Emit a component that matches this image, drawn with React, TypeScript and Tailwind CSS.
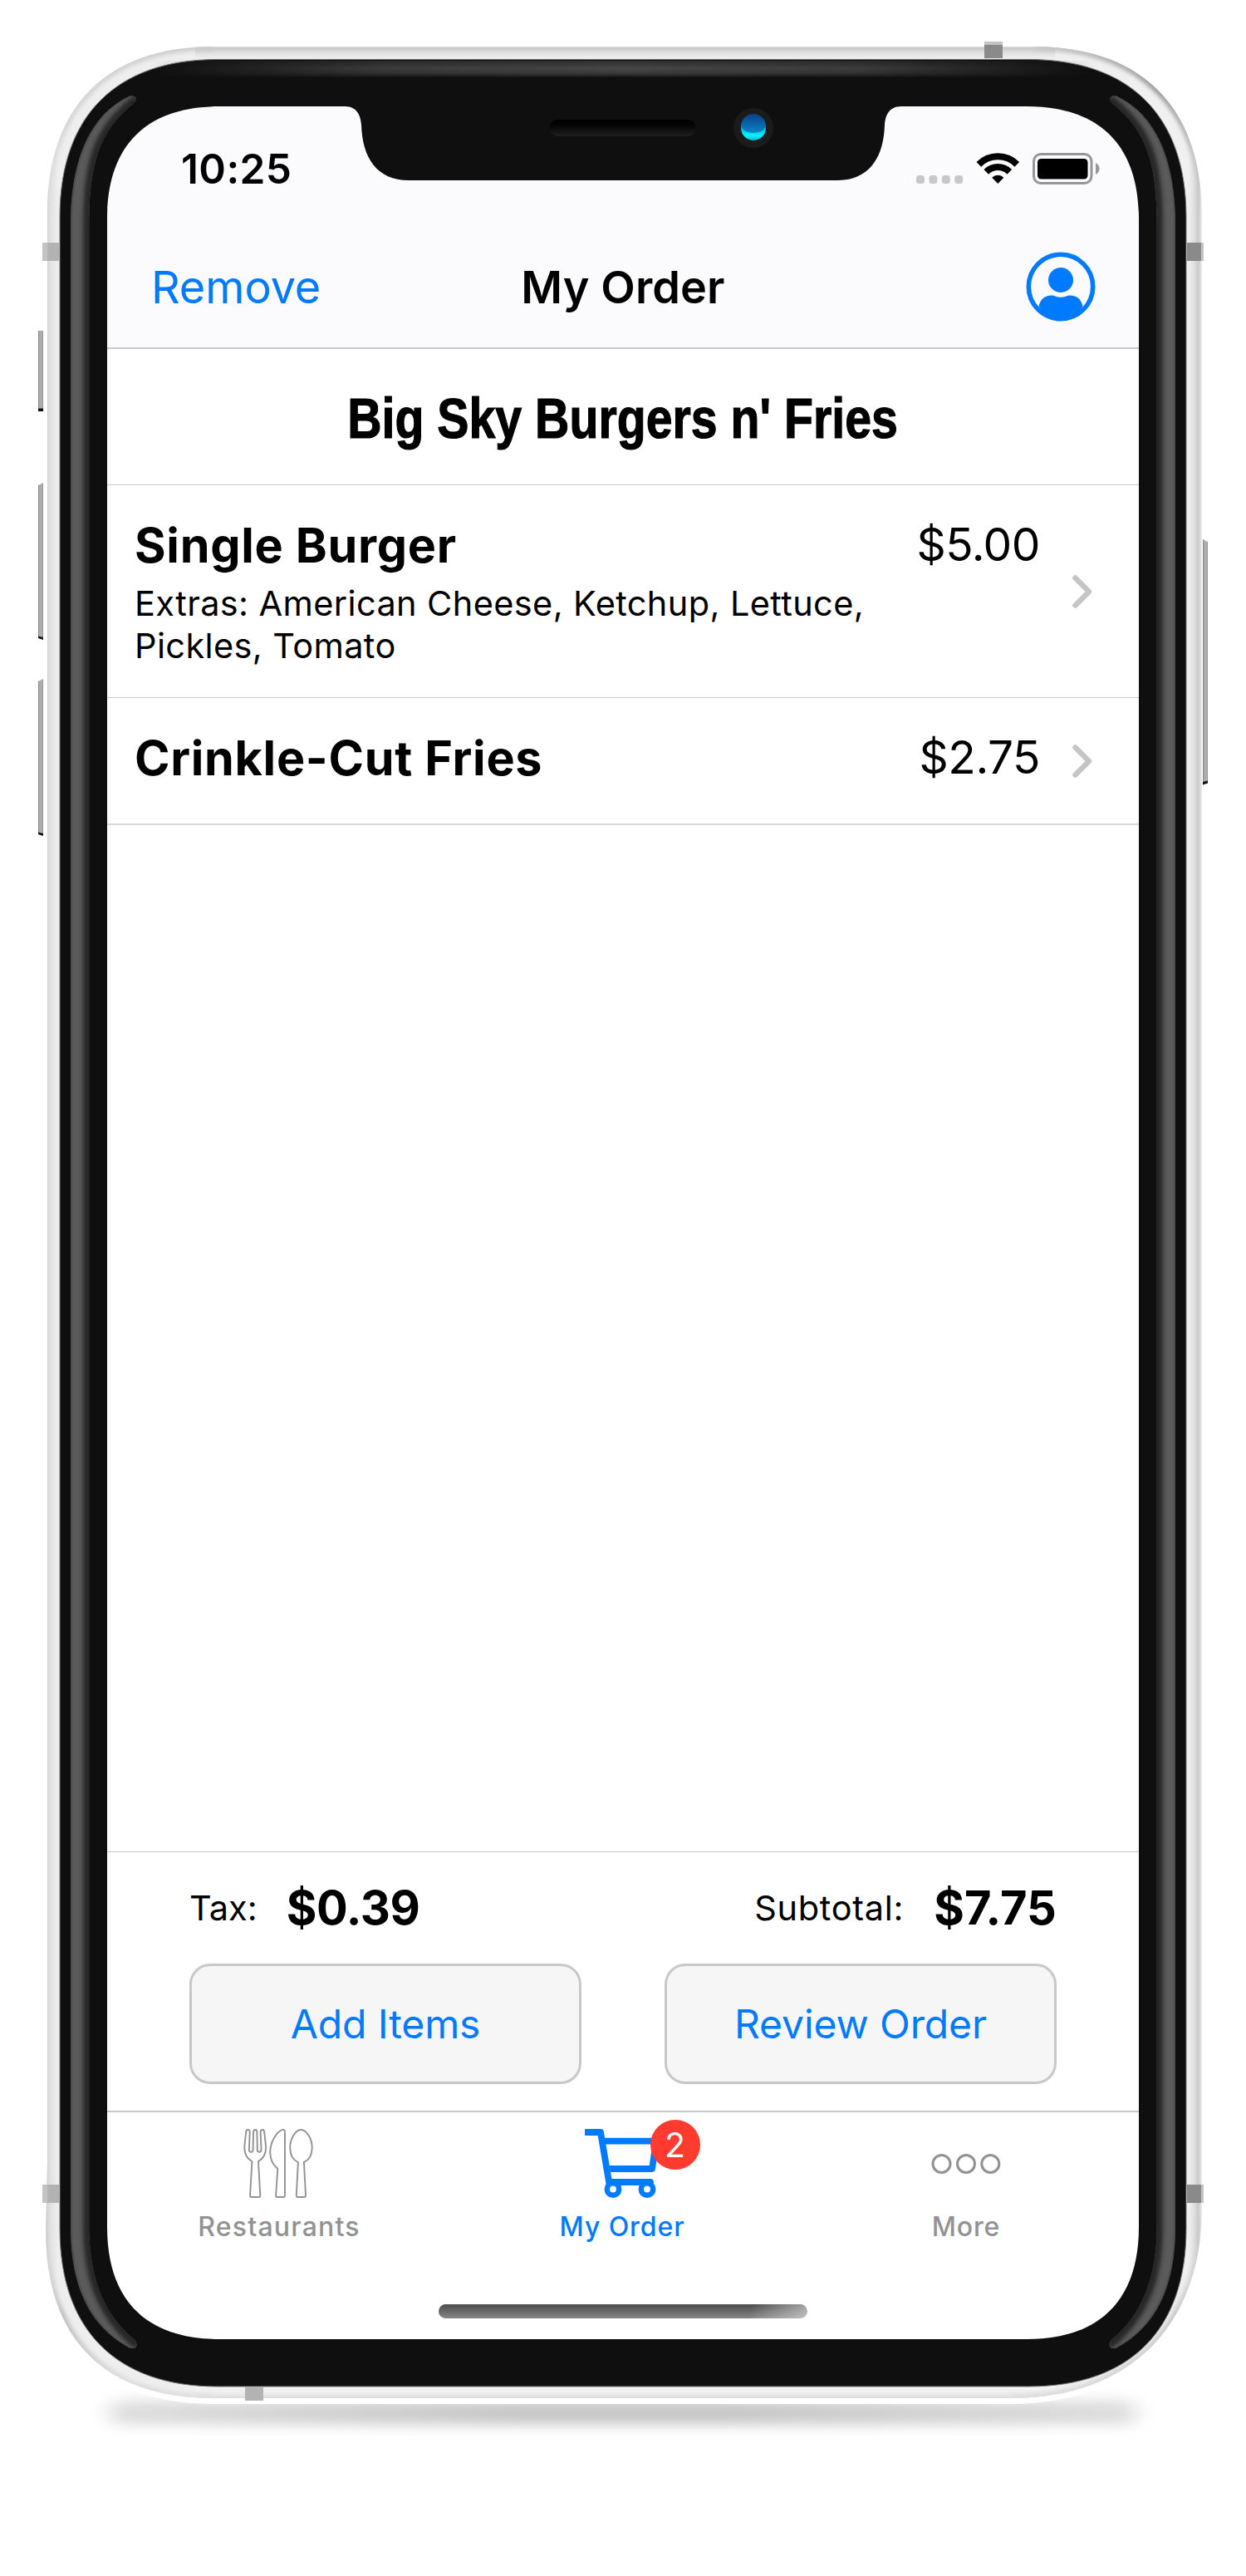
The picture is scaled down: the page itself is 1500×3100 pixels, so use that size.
import React from "react";

const items = [
  {
    name: "Single Burger",
    extras: "Extras: American Cheese, Ketchup, Lettuce, Pickles, Tomato",
    price: "$5.00",
  },
  { name: "Crinkle-Cut Fries", extras: "", price: "$2.75" },
];

const Chevron = () => (
  <svg className="self-center shrink-0" width="24" height="40" viewBox="0 0 24 40" fill="none">
    <path
      d="M3.5 3.5 L20 20 L3.5 36.5"
      stroke="#c5c5c7"
      strokeWidth="6.5"
      strokeLinecap="round"
      strokeLinejoin="round"
    />
  </svg>
);

const StatusBar = () => (
  <div className="flex items-center justify-between h-[150px] pl-[89px] pr-[46px]">
    <span className="text-[49.5px] font-semibold tracking-[0.4px]">10:25</span>
    <svg width="222" height="38" viewBox="0 0 222 38">
      <g fill="#c8c8c9">
        <rect x="0" y="27" width="10" height="10" rx="3.5" />
        <rect x="15.4" y="27" width="10" height="10" rx="3.5" />
        <rect x="30.8" y="27" width="10" height="10" rx="3.5" />
        <rect x="46.2" y="27" width="10" height="10" rx="3.5" />
      </g>
      <g fill="none" stroke="#000" strokeWidth="8">
        <path d="M75.3 13.9 A32.5 32.5 0 0 1 121.3 13.9" />
        <path d="M84.3 22.9 A19.8 19.8 0 0 1 112.3 22.9" />
      </g>
      <path d="M98.3 36.9 L91.2 29.8 A10 10 0 0 1 105.4 29.8 Z" />
      <rect x="141.5" y="1.5" width="69.5" height="35" rx="8.5" fill="none" stroke="#969698" strokeWidth="3" />
      <rect x="146" y="7" width="60.5" height="24.5" rx="4.5" />
      <path d="M216 12 Q220.5 14.5 220.5 19 Q220.5 23.5 216 26 Z" fill="#969698" />
    </svg>
  </div>
);

const NavBar = () => (
  <div className="relative flex items-center justify-between h-[134px] pl-[53px] pr-[52px] text-[54px]">
    <span className="text-[#007aff] tracking-[-0.1px]">Remove</span>
    <span className="absolute inset-x-0 text-center font-semibold tracking-[0.1px]">My Order</span>
    <svg width="84" height="84" viewBox="0 0 84 84" fill="#007aff">
      <circle cx="42" cy="42" r="38.7" fill="none" stroke="#007aff" strokeWidth="5.6" />
      <circle cx="42" cy="34" r="15" />
      <path d="M15.5 66 Q18 53 31 52.6 Q33.5 52.6 36 53.7 Q42 56 48 53.7 Q50.5 52.6 53 52.6 Q66 53 68.5 66 Q58 81 42 81 Q26 81 15.5 66 Z" />
    </svg>
  </div>
);

const CutleryIcon = () => (
  <svg
    className="mr-[3px]"
    width="84"
    height="84"
    viewBox="0 0 84 84"
    fill="none"
    stroke="#929292"
    strokeWidth="1.9"
    strokeLinejoin="round"
  >
    <path d="M1.2 22 L3.2 3.5 Q3.5 1 5.6 1 Q7.8 1 7.7 4 L6.9 25 Q6.9 27.8 9.3 27.8 Q11.5 27.8 11.6 25 L12 4 Q12 1 14.2 1 Q16.4 1 16.4 4 L16.8 25 Q16.9 27.8 19.1 27.8 Q21.5 27.8 21.5 25 L20.7 4 Q20.6 1 22.8 1 Q24.9 1 25.2 3.5 L27.2 22 C27.2 31 23.5 36 18 39 L20.3 80 Q20.4 82 18.5 82 H9.9 Q8 82 8.1 80 L10.4 39 C4.9 36 1.2 31 1.2 22 Z" />
    <path d="M50 3.5 V80.5 Q50 82 48.5 82 H41 Q39 82 39.1 80 L41.3 48 C36 43.5 32.2 36 32.2 28 C32.2 16 40 3.5 46.5 1.1 Q50 0.2 50 3.5 Z" />
    <path d="M69.3 1 C76 1 82.7 12 82.7 22.5 C82.7 31 79 37.5 72.9 40 L75 80 Q75 82 73.3 82 H65.5 Q63.7 82 63.8 80 L65.9 40 C60 37.5 56.2 31 56.2 22.5 C56.2 12 62.8 1 69.3 1 Z" />
  </svg>
);

const CartIcon = () => (
  <svg width="90" height="84" viewBox="0 0 90 84" fill="none" stroke="#007aff" strokeWidth="7.8">
    <path d="M2 4 H19 L29.5 66" strokeLinejoin="round" />
    <path d="M0 4 H8" />
    <path d="M20 14.7 H86 L81 48 H27" strokeLinejoin="round" />
    <path d="M28 64 H79 V68" strokeLinejoin="round" />
    <g fill="#fff" strokeWidth="6.5">
      <circle cx="34" cy="72.5" r="7.2" />
      <circle cx="75" cy="72.5" r="7.2" />
    </g>
  </svg>
);

const MoreIcon = () => (
  <svg
    className="mr-[3px]"
    width="84"
    height="84"
    viewBox="0 0 84 84"
    fill="none"
    stroke="#929292"
    strokeWidth="3"
  >
    <circle cx="12.5" cy="42" r="10.5" />
    <circle cx="42" cy="42" r="10.5" />
    <circle cx="71.3" cy="42" r="10.5" />
  </svg>
);

const TabBar = () => (
  <div className="grid grid-cols-3 pt-5 text-[32px] font-medium text-[#929292] leading-[39px]">
    <div className="flex flex-col items-center gap-[14px]">
      <CutleryIcon />
      <span className="tracking-[1.2px]">Restaurants</span>
    </div>
    <div className="flex flex-col items-center gap-[14px] text-[#007aff]">
      <div className="relative mr-[3px]">
        <CartIcon />
        <span className="absolute left-[79px] -top-[11px] flex items-center justify-center size-[60px] rounded-full bg-[#ff3b30] text-white text-[41px] font-normal">
          2
        </span>
      </div>
      <span className="mr-[2px] tracking-[0.9px]">My Order</span>
    </div>
    <div className="flex flex-col items-center gap-[14px]">
      <MoreIcon />
      <span className="mr-[2px] tracking-[0.8px]">More</span>
    </div>
  </div>
);

const Totals = () => (
  <div className="h-[314px] border-t border-b-2 border-[#c8c8c8] px-[99px] pt-[33px]">
    <div className="flex justify-between h-[68px] text-[41.5px]">
      <div className="flex items-center gap-[35px]">
        <span>Tax:</span>
        <span className="text-[56px] font-bold tracking-[-0.4px]">$0.39</span>
      </div>
      <div className="flex items-center gap-[36px]">
        <span className="tracking-[0.7px]">Subtotal:</span>
        <span className="text-[56px] font-bold tracking-[0.1px]">$7.75</span>
      </div>
    </div>
    <div className="flex justify-between mt-[33px] text-[48px] tracking-[-0.1px] text-[#007aff]">
      <button className="w-[472px] h-[145px] rounded-[25px] border-3 border-[#c8c8c8] bg-[#f6f6f6]">
        Add Items
      </button>
      <button className="w-[472px] h-[145px] rounded-[25px] border-3 border-[#c8c8c8] bg-[#f6f6f6]">
        Review Order
      </button>
    </div>
  </div>
);

const GlassHighlight = () => (
  <g clipPath="url(#glossClip)">
    <rect x="80" y="100" width="90" height="2740" fill="#5b5b5b" />
    <path
      d="M168 121 C122 156 109 192 109 270 V2680 C109 2740 125 2785 168 2820"
      stroke="#262626"
      strokeWidth="18"
      filter="url(#soft3)"
    />
    <path
      d="M156 114 C104 140 85 200 85 270 V2680 C85 2745 104 2798 156 2827"
      stroke="#404040"
      strokeWidth="2"
      filter="url(#soft)"
    />
  </g>
);

const PhoneFrame = () => (
  <svg
    className="absolute inset-0 pointer-events-none"
    width="1500"
    height="3100"
    viewBox="0 0 1500 3100"
    fill="none"
  >
    <defs>
      <linearGradient id="metal" gradientUnits="userSpaceOnUse" x1="57" y1="0" x2="1447" y2="0">
        <stop offset="0" stopColor="#d2d2d2" />
        <stop offset="0.002" stopColor="#e0e0e0" />
        <stop offset="0.009" stopColor="#eeeeee" />
        <stop offset="0.988" stopColor="#f0f0f0" />
        <stop offset="0.993" stopColor="#e0e0e0" />
        <stop offset="0.997" stopColor="#c9c9c9" />
        <stop offset="1" stopColor="#efefef" />
      </linearGradient>
      <linearGradient id="metalTop" gradientUnits="userSpaceOnUse" x1="0" y1="56" x2="0" y2="71">
        <stop offset="0" stopColor="#dcdcdc" />
        <stop offset="0.15" stopColor="#cacaca" />
        <stop offset="0.5" stopColor="#e0e0e0" />
        <stop offset="1" stopColor="#f0f0f0" />
      </linearGradient>
      <linearGradient id="metalBottom" gradientUnits="userSpaceOnUse" x1="0" y1="2872" x2="0" y2="2887">
        <stop offset="0" stopColor="#f6f6f6" />
        <stop offset="0.6" stopColor="#ebebeb" />
        <stop offset="1" stopColor="#dadada" />
      </linearGradient>
      <linearGradient id="edgeTL" gradientUnits="userSpaceOnUse" x1="57" y1="256" x2="257" y2="56">
        <stop offset="0" stopColor="#d6d6d6" stopOpacity="0" />
        <stop offset="0.3" stopColor="#d6d6d6" />
        <stop offset="1" stopColor="#cccccc" />
      </linearGradient>
      <linearGradient id="edgeTR" gradientUnits="userSpaceOnUse" x1="1245" y1="56" x2="1447" y2="258">
        <stop offset="0" stopColor="#cacaca" />
        <stop offset="0.5" stopColor="#9a9a9a" />
        <stop offset="0.75" stopColor="#bcbcbc" />
        <stop offset="1" stopColor="#c9c9c9" stopOpacity="0" />
      </linearGradient>
      <linearGradient id="edgeBR" gradientUnits="userSpaceOnUse" x1="1447" y1="2656" x2="1217" y2="2886">
        <stop offset="0" stopColor="#c9c9c9" stopOpacity="0" />
        <stop offset="0.35" stopColor="#c9c9c9" />
        <stop offset="1" stopColor="#e0e0e0" />
      </linearGradient>
      <linearGradient id="edgeBL" gradientUnits="userSpaceOnUse" x1="257" y1="2886" x2="54" y2="2684">
        <stop offset="0" stopColor="#e0e0e0" />
        <stop offset="0.35" stopColor="#dcdcdc" />
        <stop offset="0.7" stopColor="#bebebe" />
        <stop offset="1" stopColor="#d0d0d0" stopOpacity="0" />
      </linearGradient>
      <linearGradient id="topGlow" gradientUnits="userSpaceOnUse" x1="0" y1="73" x2="0" y2="93">
        <stop offset="0" stopColor="#444" stopOpacity="0.6" />
        <stop offset="0.45" stopColor="#474747" />
        <stop offset="0.75" stopColor="#3a3a3a" />
        <stop offset="1" stopColor="#444" stopOpacity="0.1" />
      </linearGradient>
      <linearGradient id="fadeX" gradientUnits="userSpaceOnUse" x1="180" y1="0" x2="1320" y2="0">
        <stop offset="0" stopColor="#000" />
        <stop offset="0.25" stopColor="#ccc" />
        <stop offset="0.5" stopColor="#fff" />
        <stop offset="0.75" stopColor="#ccc" />
        <stop offset="1" stopColor="#000" />
      </linearGradient>
      <mask id="glowMask" maskUnits="userSpaceOnUse" x="180" y="60" width="1140" height="50">
        <rect x="180" y="60" width="1140" height="50" fill="url(#fadeX)" />
      </mask>
      <linearGradient id="key" x1="0" y1="0" x2="1" y2="0">
        <stop offset="0" stopColor="#777" />
        <stop offset="0.25" stopColor="#ababab" />
        <stop offset="0.75" stopColor="#b0b0b0" />
        <stop offset="1" stopColor="#888" />
      </linearGradient>
      <linearGradient id="speaker" x1="0" y1="0" x2="0" y2="1">
        <stop offset="0" stopColor="#000" />
        <stop offset="0.3" stopColor="#030303" />
        <stop offset="1" stopColor="#1f1f1f" />
      </linearGradient>
      <linearGradient id="lens" x1="0" y1="0" x2="0" y2="1">
        <stop offset="0" stopColor="#0b3f86" />
        <stop offset="1" stopColor="#0786c8" />
      </linearGradient>
      <linearGradient id="lensGlow" x1="0" y1="0" x2="0" y2="1">
        <stop offset="0.3" stopColor="#1580d0" />
        <stop offset="0.8" stopColor="#00f4fa" />
        <stop offset="1" stopColor="#0fb8e0" />
      </linearGradient>
      <linearGradient id="shadowFill" x1="0" y1="0" x2="1" y2="0">
        <stop offset="0" stopColor="#dedede" />
        <stop offset="0.4" stopColor="#c6c6c6" />
        <stop offset="0.6" stopColor="#c6c6c6" />
        <stop offset="1" stopColor="#dedede" />
      </linearGradient>
      <filter id="blurShadow" filterUnits="userSpaceOnUse" x="50" y="2840" width="1400" height="120">
        <feGaussianBlur stdDeviation="13 8" />
      </filter>
      <filter id="soft" filterUnits="userSpaceOnUse" x="0" y="0" width="1500" height="3100">
        <feGaussianBlur stdDeviation="1.2" />
      </filter>
      <filter id="soft3" filterUnits="userSpaceOnUse" x="0" y="0" width="1500" height="3100">
        <feGaussianBlur stdDeviation="2.8" />
      </filter>
      <clipPath id="glossClip">
        <path d="M85 270 C85 200 104 140 156 115.5 Q163 114 164 119 Q164 121 160 125 C122 156 107.3 192 107.3 270 V2680 C107.3 2740 125 2785 160 2814 Q165 2818 164.5 2823 Q162 2828 156 2825.5 C104 2798 85 2745 85 2680 Z" />
      </clipPath>
      <clipPath id="bodyClip">
        <path d="M257 56 H1245 C1374 56 1447 129 1447 258 V2656 C1447 2799 1360 2886 1217 2886 H257 C126 2886 55 2815 55 2684 L57 2600 V256 C57 128 129 56 257 56 Z" />
      </clipPath>
      <clipPath id="bezelClip">
        <path
          clipRule="evenodd"
          d="M40 40 H1460 V2900 H40 Z M264 128 H415 C430 128 434 139 435 150 C436 190 454 217 492 217 H1008 C1046 217 1064 190 1065 150 C1066 139 1070 128 1085 128 H1236 C1324 128 1371 175 1371 263 V2680 C1371 2768 1324 2815 1236 2815 H264 C176 2815 129 2768 129 2680 V263 C129 175 176 128 264 128 Z"
        />
      </clipPath>
    </defs>

    {/* ground shadow */}
    <rect x="132" y="2889" width="1236" height="29" rx="14" fill="url(#shadowFill)" filter="url(#blurShadow)" />

    {/* side keys */}
    <g fill="url(#key)">
      <path d="M46 398 H52 V494 H46 Z" />
      <path d="M46 584 L52 581 V768 H46 Z" />
      <path d="M46 820 L52 817 V1004 H46 Z" />
      <path d="M1448 649 L1454 652 V942 L1448 943 Z" />
    </g>
    <g fill="#111">
      <path d="M46 491.5 H52 V495 H46 Z" />
      <path d="M46 765.5 L52 767 V770 L46 768 Z" />
      <path d="M46 1001.5 L52 1003 V1006 L46 1004 Z" />
      <path d="M1448 941 L1454 939.5 V942.5 L1448 944.5 Z" />
    </g>

    {/* body with the screen cut out */}
    <path
      fillRule="evenodd"
      fill="#fff"
      d="M257 56 H1245 C1374 56 1447 129 1448 258 V2663 C1448 2806 1360 2893 1217 2893 H257 C126 2893 52 2820 52 2690 V256 C55 128 129 56 257 56 Z M264 128 H1236 C1324 128 1371 175 1371 263 V2680 C1371 2768 1324 2815 1236 2815 H264 C176 2815 129 2768 129 2680 V263 C129 175 176 128 264 128 Z"
    />
    <g clipPath="url(#bodyClip)">
      <path
        fillRule="evenodd"
        fill="url(#metal)"
        d="M40 40 H1460 V2900 H40 Z M264 128 H1236 C1324 128 1371 175 1371 263 V2680 C1371 2768 1324 2815 1236 2815 H264 C176 2815 129 2768 129 2680 V263 C129 175 176 128 264 128 Z"
      />
      <rect x="235" y="56" width="1035" height="16" fill="url(#metalTop)" />
      <rect x="235" y="2872" width="1035" height="15" fill="url(#metalBottom)" />
      <g strokeWidth="9" filter="url(#soft3)">
        <path d="M57 256 C57 128 129 56 257 56" stroke="url(#edgeTL)" />
        <path d="M1245 56 C1374 56 1447 129 1447 258" stroke="url(#edgeTR)" />
        <path d="M1447 2656 C1447 2799 1360 2886 1217 2886" stroke="url(#edgeBR)" />
        <path d="M257 2886 C126 2886 55 2815 55 2684" stroke="url(#edgeBL)" />
      </g>
    </g>

    {/* glass bezel and notch */}
    <path
      fill="#0f0f0f"
      stroke="#777"
      strokeWidth="1"
      d="M262 71.5 H1238 C1360 71.5 1428 139 1428 261 V2682 C1428 2804 1360 2872 1238 2872 H262 C140 2872 72 2804 72 2682 V261 C72 139 140 71.5 262 71.5 Z"
      clipPath="url(#bezelClip)"
    />
    <rect x="180" y="73" width="1140" height="20" fill="url(#topGlow)" mask="url(#glowMask)" />
    <GlassHighlight />
    <g transform="translate(1500 0) scale(-1 1)">
      <GlassHighlight />
    </g>

    {/* antenna bands */}
    <g fill="#b3b3b3">
      <rect x="51" y="292" width="20" height="22" />
      <rect x="51" y="2629" width="20" height="22" />
      <rect x="295" y="2873" width="22" height="16" />
    </g>
    <g fill="#8a8a8a">
      <rect x="1429" y="292" width="20" height="22" />
      <rect x="1429" y="2629" width="20" height="22" />
      <rect x="1185" y="54" width="22" height="16" />
    </g>
    <g fill="#c4c4c4">
      <rect x="51" y="292" width="6" height="22" />
      <rect x="51" y="2629" width="6" height="22" />
      <rect x="1446" y="292" width="3" height="22" />
      <rect x="1446" y="2629" width="3" height="22" />
      <rect x="1185" y="50" width="22" height="4" />
    </g>

    {/* speaker and camera */}
    <rect x="661" y="144" width="177" height="20" rx="10" fill="url(#speaker)" />
    <circle cx="907" cy="154" r="24" fill="#1b1b1b" />
    <circle cx="907" cy="154" r="15" fill="url(#lensGlow)" />
    <path d="M892 152 A15 15 0 0 1 922 152 Q918 160 907 160 Q896 160 892 152 Z" fill="url(#lens)" />
  </svg>
);

const App = () => {
  return (
    <div className="relative w-[1500px] h-[3100px] bg-white px-[129px] pt-[128px] overflow-hidden">
      <div className="flex flex-col h-[2687px] bg-white text-black font-['Inter',sans-serif]">
        <div className="h-[292px] shrink-0 bg-[#fbfbfd] border-b-2 border-[#c8c8c8]">
          <StatusBar />
          <NavBar />
        </div>
        <h1 className="h-[164px] shrink-0 border-b border-[#c8c8c8] flex justify-center pt-[43px] text-[68px] leading-[80px] font-bold font-['Liberation_Sans',sans-serif] whitespace-nowrap">
          <span className="origin-center scale-x-[0.842] [-webkit-text-stroke:1.2px_black]">
            Big Sky Burgers n' Fries
          </span>
        </h1>
        <ul>
          {items.map((item) => (
            <li
              key={item.name}
              className="flex min-h-[153px] pl-[33px] pr-[56px] border-b border-[#c8c8c8] last:border-b-2 last:border-[#d8d8d8]"
            >
              <div className="flex-1 pt-[42px] pb-[36px]">
                <p className="text-[57.5px] leading-[60px] font-bold tracking-[0.7px]">{item.name}</p>
                {item.extras && (
                  <p className="w-[920px] mt-[15px] text-[41.5px] leading-[51px] tracking-[0.38px]">
                    {item.extras}
                  </p>
                )}
              </div>
              <p className="pt-[42px] text-[55px] leading-[59px] mr-[39px] tracking-[-0.5px]">
                {item.price}
              </p>
              <Chevron />
            </li>
          ))}
        </ul>
        <div className="flex-1" />
        <Totals />
        <div className="h-[273px] shrink-0 flex flex-col justify-between pb-[25px]">
          <TabBar />
          <div className="self-center w-[444px] h-[17px] rounded-full bg-[linear-gradient(105deg,transparent_84%,rgba(255,255,255,0.5)),linear-gradient(#4c4c4c,#858585)]" />
        </div>
      </div>
      <PhoneFrame />
    </div>
  );
};

export default App;
